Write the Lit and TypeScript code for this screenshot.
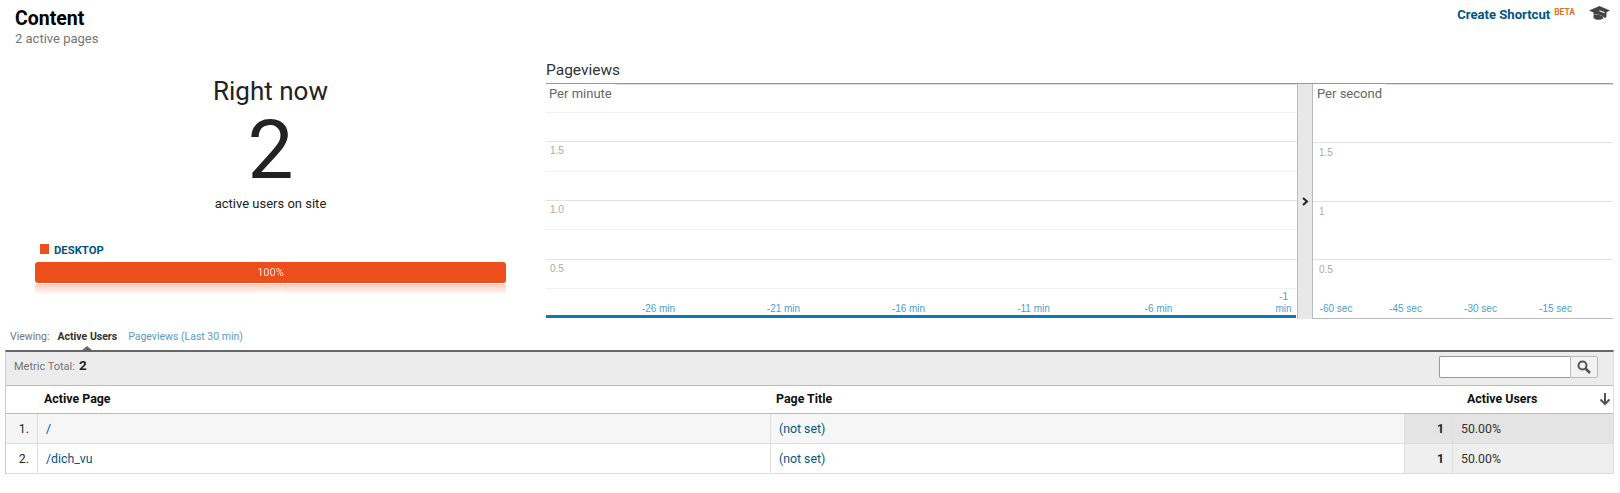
import { LitElement, html, css } from "lit";
import { customElement } from "lit/decorators.js";

const minuteTicks = ["-26 min", "-21 min", "-16 min", "-11 min", "-6 min"];
const secondTicks = ["-60 sec", "-45 sec", "-30 sec", "-15 sec"];
const rows = [
  { n: "1.", page: "/", title: "(not set)", users: "1", pct: "50.00%" },
  { n: "2.", page: "/dich_vu", title: "(not set)", users: "1", pct: "50.00%" },
];

@customElement("app-root")
export class AppRoot extends LitElement {
  static styles = css`
    :host {
      display: block;
      box-sizing: border-box;
      width: 1620px;
      height: 493px;
      overflow: hidden;
      background: #fff;
      border-right: 3px solid #fafafa;
      font-family: Roboto, "Liberation Sans", sans-serif;
      color: #222;
    }
    * { box-sizing: border-box; }

    .head {
      display: flex;
      justify-content: space-between;
      height: 50px;
      padding: 8px 7px 0 15px;
    }
    .head h1 {
      margin: 0;
      font-size: 19.5px;
      line-height: 21px;
      font-weight: 700;
      color: #000;
    }
    .head p {
      margin: 2px 0 0;
      font-size: 13px;
      line-height: 16px;
      color: #757575;
    }
    .tools {
      display: flex;
      align-items: flex-start;
      gap: 14px;
      margin-top: -2px;
    }
    .shortcut {
      display: flex;
      align-items: flex-start;
      gap: 4px;
      padding-top: 1px;
      font-size: 13.1px;
      line-height: 16px;
      font-weight: 700;
      color: #058;
    }
    .shortcut sup {
      font-size: 8.5px;
      line-height: 11px;
      font-weight: 700;
      color: #e4702f;
    }

    .top {
      display: flex;
      height: 274px;
    }
    .now {
      flex: none;
      width: 546px;
      padding: 0 40px 0 35px;
    }
    .now-main {
      text-align: center;
      padding-top: 24px;
      height: 194px;
    }
    .now-label {
      font-size: 26px;
      line-height: 34px;
      font-weight: 400;
    }
    .now-value {
      font-size: 82px;
      line-height: 86px;
      font-weight: 400;
      margin-top: -1px;
    }
    .now-sub {
      font-size: 13px;
      line-height: 16px;
      margin-top: 3px;
    }
    .legend {
      display: flex;
      align-items: flex-start;
      gap: 5px;
      height: 12px;
      padding-left: 5px;
      font-size: 11.3px;
      line-height: 13px;
      font-weight: 700;
      color: #058;
    }
    .swatch {
      width: 9px;
      height: 10px;
      background: #ee4f1b;
    }
    .bar {
      height: 21px;
      margin-top: 6px;
      border-radius: 3px;
      background: #ec4f1b;
      color: #fde3d8;
      font-size: 11px;
      line-height: 21px;
      text-align: center;
      -webkit-box-reflect: below 1px linear-gradient(transparent 50%, rgba(255, 255, 255, 0.3));
    }

    .views {
      flex: none;
      width: 1067px;
    }
    .views h2 {
      margin: 0;
      height: 33px;
      padding-top: 10px;
      font-size: 15.5px;
      line-height: 20px;
      font-weight: 400;
      color: #333;
    }
    .charts {
      display: flex;
      align-items: flex-start;
      border-top: 1px solid #999;
    }
    .chart { min-width: 0; }
    .chart.minute { flex: none; width: 751px; }
    .chart.second { flex: 1; }
    .chart-head {
      display: flex;
      height: 29px;
      border-bottom: 1px solid #f1f1f1;
    }
    .chart-name {
      flex: none;
      width: 69px;
      padding: 2px 0 0 3px;
      font-size: 13px;
      line-height: 16px;
      color: #666;
    }
    .chart-rest {
      flex: 1;
      height: 1px;
      background: #ddd;
    }
    .bands {
      display: grid;
      grid-auto-rows: 1fr;
      height: 176px;
    }
    .band {
      border-bottom: 1px solid #f1f1f1;
      font: 10px/11px "Liberation Sans", sans-serif;
      color: #aaa;
      padding: 3px 0 0 4px;
    }
    .band.major { border-bottom-color: #e2e2e2; }
    .ticks {
      display: flex;
      align-items: flex-end;
      font: 10px/12px "Liberation Sans", sans-serif;
      color: #4b9fd1;
    }
    .minute .ticks {
      height: 29px;
      margin-right: 1px;
      border-bottom: 3px solid #0b78b8;
    }
    .tick {
      flex: none;
      width: 125px;
      text-align: center;
    }
    .minute .tick:first-child { margin-left: 50px; }
    .minute .tick.last {
      width: 33px;
      margin-left: 46px;
    }
    .second .tick { width: 75px; white-space: nowrap; }
    .second .tick:first-child { margin-left: -20px; padding-left: 11px; }
    .second .ticks { padding-bottom: 3px; }

    .second .chart-head {
      height: 59px;
      border-bottom-color: #e2e2e2;
    }
    .second .chart-name {
      width: 73px;
      padding-left: 4px;
    }
    .second-band {
      height: 59px;
      padding: 4px 0 0 6px;
      border-bottom: 1px solid #e2e2e2;
      font: 10px/11px "Liberation Sans", sans-serif;
      color: #aaa;
    }
    .second-band.short { height: 58px; }
    .second-foot {
      display: flex;
      flex-direction: column;
      justify-content: space-between;
      height: 59px;
      padding-top: 4px;
      border-bottom: 1px solid #bbb;
      font: 10px/11px "Liberation Sans", sans-serif;
      color: #aaa;
    }
    .second-foot > span { padding-left: 6px; }

    .split {
      flex: none;
      display: flex;
      align-items: center;
      justify-content: center;
      width: 16px;
      height: 235px;
      background: #e8e8e8;
      border-left: 1px solid #bbb;
      border-right: 1px solid #bbb;
    }

    .viewing {
      display: flex;
      align-items: center;
      height: 26px;
      padding: 0 0 2px 10px;
      font-size: 10.5px;
      color: #757575;
    }
    .viewing b {
      position: relative;
      margin-left: 8px;
      color: #333;
      font-weight: 700;
    }
    .viewing b::after {
      content: "";
      position: absolute;
      left: 23px;
      bottom: -8px;
      border-left: 6px solid transparent;
      border-right: 6px solid transparent;
      border-bottom: 5px solid #666;
    }
    .viewing a {
      margin-left: 11px;
      color: #5b9bc9;
    }

    .table {
      margin: 0 3px 0 5px;
      border-top: 2px solid #666;
      border-left: 1px solid #ccc;
      border-right: 1px solid #ddd;
    }
    .total {
      display: flex;
      align-items: flex-start;
      justify-content: space-between;
      height: 34px;
      padding: 4px 15px 0 8px;
      background: #ececec;
      border-bottom: 1px solid #bbb;
    }
    .metric {
      display: flex;
      align-items: baseline;
      gap: 4px;
      padding-top: 1px;
      font-size: 11px;
      line-height: 16px;
      color: #757575;
    }
    .metric b {
      font-size: 13.5px;
      color: #222;
    }
    .search { display: flex; }
    .search input {
      width: 131px;
      height: 22px;
      margin: 0;
      padding: 0;
      border: 1px solid #999;
      border-right: 0;
      border-radius: 2px 0 0 2px;
      background: #fff;
      outline: none;
    }
    .search button {
      display: flex;
      align-items: center;
      justify-content: center;
      width: 28px;
      height: 22px;
      padding: 0;
      border: 1px solid #bbb;
      border-radius: 0 2px 2px 0;
      background: #f2f2f2;
    }
    .row {
      display: grid;
      grid-template-columns: 32px 733px 634px 48px 1fr;
      height: 30px;
      font-size: 12.3px;
      line-height: 28px;
      border-bottom: 1px solid #ddd;
    }
    .row > div { padding-top: 1px; }
    .row.header {
      height: 28px;
      grid-template-columns: 764px 1fr 150px;
      font-size: 12.4px;
      line-height: 26px;
      font-weight: 700;
      color: #111;
      border-bottom-color: #bbb;
    }
    .row.header > div { padding-top: 0; }
    .row.header > div:first-child { padding-left: 38px; }
    .row.header > div:nth-child(2) { padding-left: 6px; }
    .row.header > .users {
      display: flex;
      align-items: center;
      justify-content: space-between;
      height: 26px;
      padding: 0 2px 0 4px;
    }
    .row .num {
      text-align: right;
      padding-right: 8px;
      background: #f5f5f5;
      border-right: 1px solid #ddd;
    }
    .row .link {
      padding-left: 8px;
      color: #058;
      border-right: 1px solid #ddd;
    }
    .row .metric-val {
      text-align: right;
      padding-right: 8px;
      font-weight: 700;
      color: #222;
      border-right: 1px solid #ddd;
    }
    .row .pct {
      padding-left: 8px;
      color: #333;
    }
    .row.first { background: #f6f6f6; }
    .row.first .metric-val, .row.first .pct { background: #e4e4e4; }
    .row.second .metric-val, .row.second .pct { background: #efefef; }
    .row.second .num { background: #fff; }
  `;

  private band(major: boolean, label = "") {
    return html`<div class="band ${major ? "major" : ""}">${label}</div>`;
  }

  render() {
    return html`
      <div class="head">
        <div>
          <h1>Content</h1>
          <p>2 active pages</p>
        </div>
        <div class="tools">
          <div class="shortcut"><span>Create Shortcut</span><sup>BETA</sup></div>
          <svg width="21" height="14" viewBox="0 0 21 14">
            <path fill="#444" d="M10.500 0 21 4.500l-3.500 1.800v4.200L16 12.200 13 9.800 8 8.300l-3.500.3v-2L0 4.500z" />
            <path fill="#444" d="M4.500 8.800c2-.6 3.500-.5 5 0l4 1.300.8 2.400c-3 1.800-7.500 1.700-9.800-.6z" />
            <path fill="#fff" d="M10.500 4.200 15.500 6v1.200L10.300 5.300z" />
          </svg>
        </div>
      </div>
      <div class="top">
        <div class="now">
          <div class="now-main">
            <div class="now-label">Right now</div>
            <div class="now-value">2</div>
            <div class="now-sub">active users on site</div>
          </div>
          <div class="legend"><span class="swatch"></span>DESKTOP</div>
          <div class="bar">100%</div>
        </div>
        <div class="views">
          <h2>Pageviews</h2>
          <div class="charts">
            <div class="chart minute">
              <div class="chart-head">
                <div class="chart-name">Per minute</div>
                <div class="chart-rest"></div>
              </div>
              <div class="bands">
                ${this.band(true)}${this.band(false, "1.5")}${this.band(true)}${this.band(false, "1.0")}${this.band(true)}${this.band(false, "0.5")}
              </div>
              <div class="ticks">
                ${minuteTicks.map((t) => html`<div class="tick">${t}</div>`)}
                <div class="tick last">-1<br />min</div>
              </div>
            </div>
            <div class="split">
              <svg width="7" height="9" viewBox="0 0 7 9"><path d="M1 1l4 3.500L1 8" fill="none" stroke="#222" stroke-width="2" /></svg>
            </div>
            <div class="chart second">
              <div class="chart-head">
                <div class="chart-name">Per second</div>
                <div class="chart-rest"></div>
              </div>
              <div class="second-band">1.5</div>
              <div class="second-band short">1</div>
              <div class="second-foot">
                <span>0.5</span>
                <div class="ticks">
                  ${secondTicks.map((t) => html`<div class="tick">${t}</div>`)}
                </div>
              </div>
            </div>
          </div>
        </div>
      </div>
      <div class="viewing">Viewing: <b>Active Users</b><a>Pageviews (Last 30 min)</a></div>
      <div class="table">
        <div class="total">
          <div class="metric">Metric Total: <b>2</b></div>
          <div class="search">
            <input type="text" />
            <button>
              <svg width="14" height="14" viewBox="0 0 14 14">
                <circle cx="5.500" cy="5.500" r="4" fill="none" stroke="#555" stroke-width="2" />
                <path d="M8.500 8.500 13 13" stroke="#555" stroke-width="2.600" />
              </svg>
            </button>
          </div>
        </div>
        <div class="row header">
          <div>Active Page</div>
          <div>Page Title</div>
          <div class="users">
            <span>Active Users</span>
            <svg width="12" height="13" viewBox="0 0 12 13">
              <path d="M6 0v11M1.500 6.500 6 11l4.500-4.500" fill="none" stroke="#555" stroke-width="2" />
            </svg>
          </div>
        </div>
        ${rows.map(
          (r, i) => html`
            <div class="row ${i === 0 ? "first" : "second"}">
              <div class="num">${r.n}</div>
              <div class="link">${r.page}</div>
              <div class="link">${r.title}</div>
              <div class="metric-val">${r.users}</div>
              <div class="pct">${r.pct}</div>
            </div>
          `
        )}
      </div>
    `;
  }
}
